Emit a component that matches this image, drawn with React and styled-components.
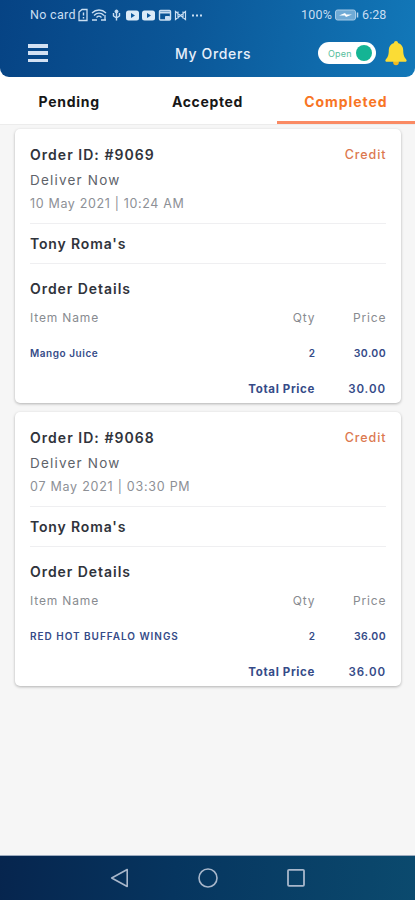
import React from "react";
import styled, { createGlobalStyle } from "styled-components";

const GlobalStyle = createGlobalStyle`
  * {
    box-sizing: border-box;
  }

  body {
    margin: 0;
    background: #f6f6f6;
    font-family: Inter, "Open Sans", sans-serif;
  }
`;

const Screen = styled.div`
  width: 415px;
  height: 900px;
  display: flex;
  flex-direction: column;
  overflow: hidden;
  background: #f6f6f6;
`;

const TopArea = styled.div`
  background: #fff;
`;

const Header = styled.header`
  height: 77px;
  border-radius: 0 0 9px 9px;
  background: linear-gradient(100deg, #064384 0%, #0b5798 45%, #1278b9 100%);
  color: #e6effa;
`;

const StatusBar = styled.div`
  height: 29px;
  padding: 0 29px 0 30px;
  display: flex;
  align-items: center;
  justify-content: space-between;
  font-family: Roboto, sans-serif;
  font-size: 12.5px;
  line-height: 29px;
  color: #c9def2;
`;

const StatusGroup = styled.div`
  display: flex;
  align-items: center;
`;

const StatusText = styled.span`
  width: ${(props) => props.$width}px;
  white-space: nowrap;
  letter-spacing: ${(props) => props.$spacing || 0}px;
`;

const NavRow = styled.div`
  height: 48px;
  padding: 0 8px 0 28px;
  display: grid;
  grid-template-columns: 110px 1fr 58px 22px;
  column-gap: 9px;
  align-items: center;
`;

const MenuButton = styled.button`
  width: 20px;
  height: 18px;
  padding: 0;
  border: 0;
  background: none;
  display: flex;
  flex-direction: column;
  justify-content: space-between;
`;

const MenuLine = styled.span`
  height: 3.5px;
  background: #d3e1f3;
`;

const Title = styled.h1`
  margin: 0 0 0 28px;
  font-size: 14px;
  font-weight: 500;
  letter-spacing: 0.65px;
  white-space: nowrap;
`;

const Toggle = styled.div`
  width: 58px;
  height: 22px;
  padding: 0 4px 0 10px;
  border-radius: 11px;
  background: #fff;
  display: flex;
  align-items: center;
  justify-content: space-between;
  font-size: 9px;
  letter-spacing: 0.2px;
  color: #55bd9c;
`;

const Knob = styled.span`
  width: 16px;
  height: 16px;
  border-radius: 50%;
  background: #14b494;
`;

const Tabs = styled.nav`
  height: 48px;
  display: grid;
  grid-template-columns: repeat(3, 1fr);
  border-bottom: 1px solid #ececec;
`;

const Tab = styled.div`
  display: flex;
  align-items: center;
  justify-content: center;
  padding-top: 4px;
  border-bottom: 3px solid ${(props) => (props.$active ? "#fa8a63" : "transparent")};
  font-size: 14px;
  font-weight: 700;
  letter-spacing: ${(props) => props.$spacing}px;
  color: ${(props) => (props.$active ? "#f87524" : "#171717")};
`;

const OrderList = styled.main`
  flex: 1;
  padding: 4px 14px 0 15px;
  display: flex;
  flex-direction: column;
  gap: 9px;
`;

const Card = styled.article`
  height: 274px;
  padding: 13px 15px 0;
  border-radius: 5px;
  background: #fff;
  box-shadow: 0 1px 3px rgba(0, 0, 0, 0.28);
`;

const Row = styled.div`
  height: ${(props) => props.$height}px;
  display: flex;
  align-items: center;
  justify-content: space-between;
`;

const Divider = styled.div`
  height: 1px;
  margin-top: ${(props) => props.$top || 0}px;
  background: #efeff1;
`;

const Details = styled.section`
  padding-top: 10px;
`;

const ItemRow = styled.div`
  height: ${(props) => props.$height}px;
  display: grid;
  grid-template-columns: 1fr 86px 71px;
  align-items: center;
  text-align: right;
`;

const Heading = styled.span`
  font-size: 14px;
  font-weight: 600;
  letter-spacing: ${(props) => props.$spacing}px;
  padding-bottom: 1px;
  color: #30333b;
`;

const Credit = styled.span`
  font-size: 12.5px;
  font-weight: 500;
  letter-spacing: 0.9px;
  margin-right: -0.4px;
  padding-bottom: 2px;
  color: #dc794f;
`;

const Delivery = styled.span`
  font-size: 13.5px;
  letter-spacing: 1.2px;
  padding-bottom: 2px;
  color: #60636a;
`;

const PlacedAt = styled.span`
  font-size: 12.5px;
  letter-spacing: ${(props) => props.$spacing}px;
  padding-bottom: 2px;
  color: #8d9096;
`;

const Label = styled.span`
  font-size: 12px;
  letter-spacing: 0.85px;
  margin-right: -0.4px;
  padding-bottom: 2px;
  color: #888b90;
  text-align: ${(props) => (props.$left ? "left" : "right")};
`;

const Value = styled.span`
  font-size: ${(props) => props.$size || 10}px;
  font-weight: ${(props) => props.$weight || 600};
  letter-spacing: ${(props) => props.$spacing || 0}px;
  white-space: nowrap;
  color: #354b88;
  text-align: ${(props) => (props.$left ? "left" : "right")};
`;

const Total = styled(Value)`
  grid-column: ${(props) => (props.$wide ? "1 / 3" : "auto")};
`;

const SystemNav = styled.footer`
  height: 45px;
  border-top: 1px solid #9eacbf;
  background: linear-gradient(95deg, #06254e 0%, #06355f 42%, #0b4a6e 100%);
  display: flex;
  justify-content: center;
  align-items: center;
  gap: 68px;
`;

const orders = [
  {
    id: "#9069",
    date: "10 May 2021 | 10:24 AM",
    dateSpacing: 0.65,
    item: "Mango Juice",
    itemSpacing: 0.55,
    price: "30.00",
  },
  {
    id: "#9068",
    date: "07 May 2021 | 03:30 PM",
    dateSpacing: 0.75,
    item: "RED HOT BUFFALO WINGS",
    itemSpacing: 0.97,
    price: "36.00",
  },
];

const StatusIcons = () => (
  <svg width="130" height="18" viewBox="76 5 130 18" fill="none" stroke="#c9def2">
    <path d="M79 11 82 8.5h5v11h-8z" strokeWidth="1.3" />
    <path d="M83.5 11.5v3M83.5 16v1.5" strokeWidth="1.4" />
    <path d="M92 12c4-4 10-4 14 0M94 14.5c3-3 7-3 10 0M96.5 16.5c2-2 3-2 5 0" strokeWidth="1.3" />
    <path d="M92 19h5M101 19h5M105 14v5" strokeWidth="1.3" />
    <path d="M116.5 9v10.5M113.5 12v3l3 2 3-2v-3" strokeWidth="1.4" />
    <circle cx="116.5" cy="10.5" r="1.5" fill="#c9def2" />
    <rect x="126" y="9.5" width="13" height="10" rx="2.5" fill="#dcebf8" stroke="none" />
    <path d="m131 12 4 2.5-4 2.5z" fill="#0c579b" stroke="none" />
    <rect x="142" y="9.5" width="13" height="10" rx="2.5" fill="#dcebf8" stroke="none" />
    <path d="m147 12 4 2.5-4 2.5z" fill="#0c579b" stroke="none" />
    <rect x="159.5" y="9.5" width="11" height="9.5" rx="1" strokeWidth="1.4" />
    <path d="M160 11.5h10" strokeWidth="2" />
    <path d="M165.5 15.5h4v3h-4z" fill="#c9def2" />
    <path d="M175.5 10.5v8l5-4 5 4v-8l-5 4zM178 10.5v7M183 10.5v7" strokeWidth="1.2" />
    <path d="M192 14.5h2M196 14.5h2M200 14.5h2" strokeWidth="1.8" />
  </svg>
);

const Battery = () => (
  <svg width="24" height="12" viewBox="0 0 24 12">
    <rect x="0.5" y="1" width="20" height="10" rx="2" fill="#6faad5" stroke="#a6cbe8" />
    <path d="M4 6.5 10 4l1.2 1.4L17 5.5 11 8 9.8 6.6z" fill="#fff" />
    <path d="M22.5 3.5v5" stroke="#b8d6ed" strokeWidth="1.5" />
  </svg>
);

const Bell = () => (
  <svg width="22" height="26" viewBox="0 0 22 26">
    <circle cx="11" cy="22.5" r="2.8" fill="#f2b91f" />
    <path
      d="M11 1c1.2 0 2 .8 2 1.9 3.4 1 5.2 3.7 5.2 7.2 0 5 1 7.2 3 9.3.9 1 .3 2.4-1 2.4H1.8c-1.3 0-1.9-1.4-1-2.4 2-2.1 3-4.3 3-9.3 0-3.5 1.8-6.2 5.2-7.2C9 1.8 9.8 1 11 1z"
      fill="#fbdc35"
    />
  </svg>
);

const OrderCard = ({ order }) => (
  <Card>
    <Row $height={26}>
      <Heading $spacing={1.03}>Order ID: {order.id}</Heading>
      <Credit>Credit</Credit>
    </Row>
    <Row $height={26}>
      <Delivery>Deliver Now</Delivery>
    </Row>
    <Row $height={20}>
      <PlacedAt $spacing={order.dateSpacing}>{order.date}</PlacedAt>
    </Row>
    <Divider $top={9} />
    <Row $height={39}>
      <Heading $spacing={0.85}>Tony Roma's</Heading>
    </Row>
    <Divider />
    <Details>
      <Row $height={30}>
        <Heading $spacing={0.95}>Order Details</Heading>
      </Row>
      <ItemRow $height={28}>
        <Label $left>Item Name</Label>
        <Label>Qty</Label>
        <Label>Price</Label>
      </ItemRow>
      <ItemRow $height={42}>
        <Value $left $spacing={order.itemSpacing}>{order.item}</Value>
        <Value>2</Value>
        <Value $size={10.5} $spacing={0.4}>{order.price}</Value>
      </ItemRow>
      <ItemRow $height={30}>
        <Total $wide $size={11.5} $weight={700} $spacing={0.65}>Total Price</Total>
        <Total $size={11.5} $spacing={0.95}>{order.price}</Total>
      </ItemRow>
    </Details>
  </Card>
);

const App = () => (
  <>
    <GlobalStyle />
    <Screen>
      <TopArea>
        <Header>
          <StatusBar>
            <StatusGroup>
              <StatusText $width={46} $spacing={0.3}>No card</StatusText>
              <StatusIcons />
            </StatusGroup>
            <StatusGroup>
              <StatusText $width={34} $spacing={0.2}>100%</StatusText>
              <Battery />
              <StatusText $width={27}>&nbsp;6:28</StatusText>
            </StatusGroup>
          </StatusBar>
          <NavRow>
            <MenuButton aria-label="Menu">
              <MenuLine />
              <MenuLine />
              <MenuLine />
            </MenuButton>
            <Title>My Orders</Title>
            <Toggle>
              Open
              <Knob />
            </Toggle>
            <Bell />
          </NavRow>
        </Header>
        <Tabs>
          <Tab $spacing={0.75}>Pending</Tab>
          <Tab $spacing={0.65}>Accepted</Tab>
          <Tab $active $spacing={0.95}>Completed</Tab>
        </Tabs>
      </TopArea>
      <OrderList>
        {orders.map((order) => (
          <OrderCard key={order.id} order={order} />
        ))}
      </OrderList>
      <SystemNav>
        <svg width="20" height="20" viewBox="0 0 20 20" fill="none" stroke="#a8b7cb" strokeWidth="1.6">
          <path d="M17.2 1.5v17L1.7 10z" strokeLinejoin="round" />
        </svg>
        <svg width="20" height="20" viewBox="0 0 20 20" fill="none" stroke="#a8b7cb" strokeWidth="1.6">
          <circle cx="10" cy="10" r="9" />
        </svg>
        <svg width="20" height="20" viewBox="0 0 20 20" fill="none" stroke="#a8b7cb" strokeWidth="1.8">
          <rect x="2" y="1.8" width="16" height="16" rx="1" />
        </svg>
      </SystemNav>
    </Screen>
  </>
);

export default App;
